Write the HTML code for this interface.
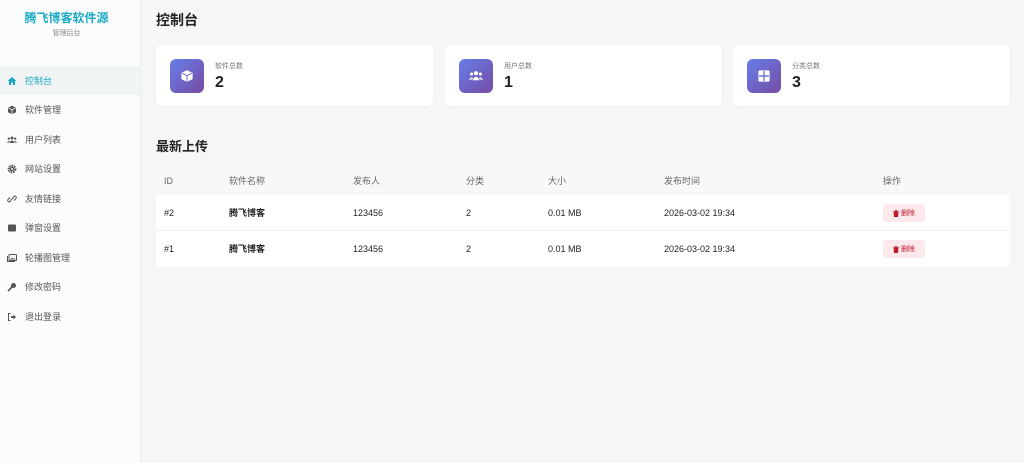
<!DOCTYPE html><html><head><meta charset="utf-8"><style>
*{margin:0;padding:0;box-sizing:border-box}
body{width:1024px;height:463px;overflow:hidden;background:#f5f6f7;font-family:"Liberation Sans","Noto Sans CJK SC",sans-serif;position:relative;color:#222}
.side{position:absolute;left:0;top:0;width:140px;height:463px;background:#fbfcfc;box-shadow:1px 0 2px rgba(0,0,0,.04)}
.logo{position:absolute;top:9px;width:133px;text-align:center;color:#1aa9c4;font-size:12px;font-weight:bold}
.sub{position:absolute;top:28px;width:133px;text-align:center;color:#888;font-size:7px}
.it{position:absolute;left:0;width:140px;height:29px;font-size:9px;color:#555;display:flex;align-items:center}
.it svg{position:absolute;left:7px;width:10px;height:10px}
.it span{position:absolute;left:25px}
.it.a{background:#f1f4f5;color:#1aa9c4}
h1{position:absolute;left:156px;top:10px;font-size:14px;font-weight:bold}
.card{position:absolute;top:45px;height:61px;width:277px;background:#fff;border-radius:6px;box-shadow:0 1px 3px rgba(0,0,0,.03)}
.ic{position:absolute;left:14px;top:14px;width:34px;height:34px;border-radius:6px;background:linear-gradient(135deg,#667eea,#764ba2);display:flex;align-items:center;justify-content:center}
.lb{position:absolute;left:59px;top:16px;font-size:7px;color:#777}
.nm{position:absolute;left:59px;top:29px;font-size:16px;font-weight:bold;color:#222}
h2{position:absolute;left:156px;top:136px;font-size:13px;font-weight:bold}
.tb{position:absolute;left:156px;top:166px;width:854px;height:101px;background:#fff;border-radius:4px}
.hd{position:absolute;left:0;top:0;width:854px;height:29px;background:#f7f8f8}
.c{position:absolute;font-size:9px;color:#222;line-height:10px;height:10px;top:10px}
.row .c{top:13px}
.hd .c{color:#666}
.row{position:absolute;left:0;width:854px;height:36px;border-bottom:1px solid #f0f0f0}
.del{position:absolute;left:727px;top:9px;width:42px;height:18px;background:#fde9ec;border-radius:3px;color:#c0182b;font-size:7px;display:flex;align-items:center;justify-content:center;gap:2px}
</style></head><body>
<div class="side">
<div class="logo">腾飞博客软件源</div><div class="sub">管理后台</div>
<div class="it a" style="top:66px"><svg viewBox="0 0 10 10"><path d="M5 1L0.5 5H2V9H4V6.5H6V9H8V5H9.5Z" fill="#1aa9c4"/></svg><span>控制台</span></div>
<div class="it" style="top:95px"><svg viewBox="0 0 10 10"><path d="M5 .8L9 2.8V7.2L5 9.2L1 7.2V2.8Z" fill="#555"/><path d="M1.5 3L5 4.8L8.5 3M5 4.8V9" stroke="#fff" stroke-width=".8" fill="none"/></svg><span>软件管理</span></div>
<div class="it" style="top:125px"><svg viewBox="0 0 10 10"><circle cx="5" cy="3" r="1.5" fill="#555"/><circle cx="1.8" cy="3.6" r="1.1" fill="#555"/><circle cx="8.2" cy="3.6" r="1.1" fill="#555"/><path d="M2.5 8Q5 3 7.5 8ZM0 8Q1.8 4.5 3 7ZM10 8Q8.2 4.5 7 7Z" fill="#555"/></svg><span>用户列表</span></div>
<div class="it" style="top:154px"><svg viewBox="0 0 10 10"><circle cx="5" cy="5" r="3.3" fill="none" stroke="#555" stroke-width="2.2" stroke-dasharray="1.6 .9"/><circle cx="5" cy="5" r="2.2" fill="#555"/><circle cx="5" cy="5" r="1" fill="#fff"/></svg><span>网站设置</span></div>
<div class="it" style="top:184px"><svg viewBox="0 0 10 10"><path d="M4 6.5L2.5 8A1.6 1.6 0 0 1 1 5.5L3 3.5M6 3.5L7.5 2A1.6 1.6 0 0 1 9 4.5L7 6.5M3.5 6.5L6.5 3.5" stroke="#555" stroke-width="1" fill="none"/></svg><span>友情链接</span></div>
<div class="it" style="top:213px"><svg viewBox="0 0 10 10"><rect x="1" y="1.5" width="8" height="7" rx="1" fill="#555"/></svg><span>弹窗设置</span></div>
<div class="it" style="top:243px"><svg viewBox="0 0 10 10"><rect x="2" y="1.5" width="7.5" height="6" rx=".8" fill="none" stroke="#555" stroke-width="1"/><path d="M.5 3V8.5H8" stroke="#555" fill="none"/><path d="M3 6.5L5 4.5L6.5 6L7.5 5L8.5 6.5Z" fill="#555"/></svg><span>轮播图管理</span></div>
<div class="it" style="top:272px"><svg viewBox="0 0 10 10"><circle cx="6.5" cy="3.5" r="2.5" fill="#555"/><path d="M5 5L1 9" stroke="#555" stroke-width="1.6"/></svg><span>修改密码</span></div>
<div class="it" style="top:302px"><svg viewBox="0 0 10 10"><path d="M3.5 1.5H1.5V8.5H3.5" stroke="#555" fill="none"/><path d="M4 4H6.5V2.5L9 5L6.5 7.5V6H4Z" fill="#555"/></svg><span>退出登录</span></div>
</div>
<h1>控制台</h1>
<div class="card" style="left:156px"><div class="ic"><svg width="14" height="14" viewBox="0 0 10 10"><path d="M5 .8L9 2.8V7.2L5 9.2L1 7.2V2.8Z" fill="#fff"/><path d="M1.5 3L5 4.8L8.5 3M5 4.8V9" stroke="#7270d0" stroke-width=".7" fill="none"/></svg></div><div class="lb">软件总数</div><div class="nm">2</div></div>
<div class="card" style="left:445px"><div class="ic"><svg width="16" height="14" viewBox="0 0 10 10"><circle cx="5" cy="3" r="1.5" fill="#fff"/><circle cx="1.8" cy="3.6" r="1.1" fill="#fff"/><circle cx="8.2" cy="3.6" r="1.1" fill="#fff"/><path d="M2.5 8Q5 3 7.5 8ZM0 8Q1.8 4.5 3 7ZM10 8Q8.2 4.5 7 7Z" fill="#fff"/></svg></div><div class="lb">用户总数</div><div class="nm">1</div></div>
<div class="card" style="left:733px"><div class="ic"><svg width="14" height="14" viewBox="0 0 10 10"><rect x="1" y="1" width="8" height="8" rx="1" fill="#fff"/><path d="M1.5 5H8.5M5 1.5V8.5" stroke="#7270d0" stroke-width="1"/></svg></div><div class="lb">分类总数</div><div class="nm">3</div></div>
<h2>最新上传</h2>
<div class="tb">
<div class="hd"><div class="c" style="left:8px">ID</div><div class="c" style="left:73px">软件名称</div><div class="c" style="left:197px">发布人</div><div class="c" style="left:310px">分类</div><div class="c" style="left:392px">大小</div><div class="c" style="left:508px">发布时间</div><div class="c" style="left:727px">操作</div></div>
<div class="row" style="top:29px"><div class="c" style="left:8px">#2</div><div class="c" style="left:73px;font-weight:bold">腾飞博客</div><div class="c" style="left:197px">123456</div><div class="c" style="left:310px">2</div><div class="c" style="left:392px">0.01 MB</div><div class="c" style="left:508px">2026-03-02 19:34</div><div class="del"><svg width="6" height="7" viewBox="0 0 6 7"><path d="M0 1H6V1.8H0ZM2 0H4V1H2ZM.6 2H5.4L5 7H1Z" fill="#c0182b"/></svg>删除</div></div>
<div class="row" style="top:65px;border:0"><div class="c" style="left:8px">#1</div><div class="c" style="left:73px;font-weight:bold">腾飞博客</div><div class="c" style="left:197px">123456</div><div class="c" style="left:310px">2</div><div class="c" style="left:392px">0.01 MB</div><div class="c" style="left:508px">2026-03-02 19:34</div><div class="del"><svg width="6" height="7" viewBox="0 0 6 7"><path d="M0 1H6V1.8H0ZM2 0H4V1H2ZM.6 2H5.4L5 7H1Z" fill="#c0182b"/></svg>删除</div></div>
</div>
</body></html>
